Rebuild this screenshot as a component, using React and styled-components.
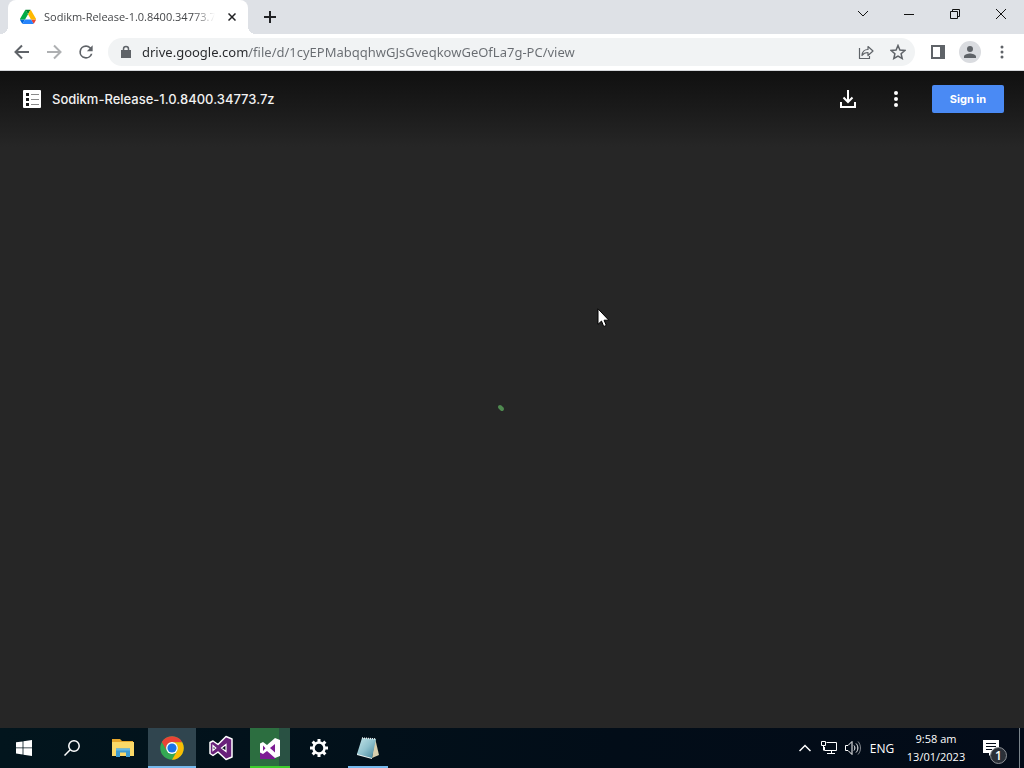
import React from "react";
import styled, { createGlobalStyle, css } from "styled-components";

const GlobalStyle = createGlobalStyle`
  * { box-sizing: border-box; }
  body { margin: 0; background: #262626; font-family: "Open Sans", "Noto Sans", sans-serif; }
  button { border: 0; padding: 0; background: none; font: inherit; color: inherit; }
  svg { display: block; flex: none; }
`;

const Screen = styled.div`
  display: flex;
  flex-direction: column;
  min-height: 100vh;
`;

/* Browser window */
const TabStrip = styled.header`
  display: flex;
  height: 34px;
  padding-left: 8px;
  background: #dee1e6;
  color: #202124;
`;

const Tab = styled.div`
  position: relative;
  display: flex;
  align-items: center;
  width: 240px;
  padding: 0 8px 0 12px;
  border-radius: 8px 8px 0 0;
  background: #fff;
  &::before, &::after {
    content: "";
    position: absolute;
    bottom: 0;
    width: 8px;
    height: 8px;
  }
  &::before { left: -8px; background: radial-gradient(circle at 0 0, #dee1e6 8px, #fff 8px); }
  &::after { right: -8px; background: radial-gradient(circle at 100% 0, #dee1e6 8px, #fff 8px); }
`;

const TabTitle = styled.span`
  flex: 1;
  min-width: 0;
  margin: 0 2px 0 8px;
  overflow: hidden;
  white-space: nowrap;
  font-size: 11px;
  line-height: 16px;
  color: #45474a;
  mask-image: linear-gradient(to right, #000 84%, transparent 96%);
`;

const IconButton = styled.button`
  display: flex;
  align-items: center;
  justify-content: center;
  flex: none;
  width: ${(p) => p.$w || 32}px;
  height: ${(p) => p.$h || 28}px;
`;

const WindowControls = styled.div`
  display: flex;
  margin-left: auto;
  color: #111;
`;

const Toolbar = styled.nav`
  display: flex;
  align-items: center;
  height: 37px;
  padding: 0 6px;
  border-bottom: 1px solid #d5d7da;
  background: #fff;
  color: #5f6368;
`;

const Omnibox = styled.div`
  display: flex;
  align-items: center;
  flex: 1;
  min-width: 0;
  height: 28px;
  margin: 0 7px 0 6px;
  padding: 0 1px 0 12px;
  border-radius: 14px;
  background: #f1f3f4;
`;

const Address = styled.input`
  flex: 1;
  min-width: 0;
  height: 24px;
  margin-left: 10px;
  padding: 0;
  border: 0;
  outline: 0;
  font: 13px/20px "Noto Sans", "Open Sans", sans-serif;
  color: transparent;
  background: linear-gradient(to right, #27292c 107px, #686c71 107px);
  background-clip: text;
`;

const Avatar = styled.span`
  display: flex;
  align-items: center;
  justify-content: center;
  width: 22px;
  height: 22px;
  border-radius: 50%;
  background: #dadce0;
`;

/* File viewer */
const Viewer = styled.main`
  display: flex;
  flex-direction: column;
  flex: 1;
  background: linear-gradient(to bottom, #101010, #1b1b1b 40px, #262626 76px);
`;

const ViewerBar = styled.div`
  display: flex;
  align-items: center;
  height: 56px;
  padding: 0 20px 0 23px;
  color: #fff;
`;

const FileName = styled.h1`
  flex: 1;
  margin: 0 0 0 11px;
  font: 500 13px/20px Inter, "Open Sans", sans-serif;
  color: #f1f1f1;
`;

const SignIn = styled.a`
  width: 72px;
  margin-left: 12px;
  border-radius: 2px;
  background: #4a8af4;
  color: #fff;
  font: 700 11px/28px Inter, "Open Sans", sans-serif;
  text-align: center;
  text-decoration: none;
`;

const Stage = styled.section`
  display: flex;
  align-items: center;
  justify-content: center;
  flex: 1;
`;

const Spinner = styled.svg`
  margin: 0 22px 40px 0;
`;

const Pointer = styled.svg`
  position: absolute;
  left: 597px;
  top: 308px;
`;

/* Desktop taskbar */
const Taskbar = styled.footer`
  display: flex;
  height: 40px;
  background: linear-gradient(to right, #02151d, #020d18 60%, #030b18);
  color: #fff;
`;

const Apps = styled.div`
  display: flex;
  gap: 1px;
  margin-left: 3px;
`;

const AppButton = styled.button`
  display: flex;
  align-items: center;
  justify-content: center;
  width: ${(p) => (p.$inset ? 40 : 48)}px;
  margin: 0 ${(p) => (p.$inset ? 4 : 0)}px;
  border-bottom: 2px solid transparent;
  border-top: 2px solid transparent;
  ${(p) => p.$state === "active" && css`background: #30454f; border-color: #30454f #30454f #76b9ed;`}
  ${(p) => p.$state === "open" && css`border-bottom-color: #76b9ed;`}
  ${(p) => p.$state === "busy" && css`
    background: linear-gradient(to right, #2c6e40 29px, #295143 29px) border-box;
    border-bottom-color: #3dcc2c;
  `}
`;

const Tray = styled.div`
  display: flex;
  align-items: center;
  margin-left: auto;
  font-size: 12px;
`;

const Language = styled(IconButton)`
  font-size: 12px;
`;

const Clock = styled.time`
  width: 74px;
  font-size: 11px;
  line-height: 18px;
  text-align: center;
  white-space: nowrap;
`;

const Notifications = styled(IconButton)`
  position: relative;
`;

const Badge = styled.span`
  position: absolute;
  right: 12px;
  bottom: 4px;
  width: 17px;
  height: 17px;
  border: 1px solid #8d9196;
  border-radius: 50%;
  background: #2b3038;
  font-size: 12px;
  font-weight: 600;
  line-height: 15px;
  text-align: center;
`;

const ShowDesktop = styled.button`
  width: 5px;
  height: 40px;
  border-left: 1px solid #7b858c;
`;

const Line = ({ size = 16, w = 1, children, ...rest }) => (
  <svg width={size} height={size} viewBox={`0 0 ${size} ${size}`} fill="none" stroke="currentColor" strokeWidth={w} {...rest}>
    {children}
  </svg>
);

const Solid = ({ size = 24, box = 24, children }) => (
  <svg width={size} height={size} viewBox={`0 0 ${box} ${box}`} fill="currentColor">{children}</svg>
);

const DriveLogo = () => (
  <svg width="16" height="16" viewBox="0 0 87 80">
    <path fill="#0066da" d="m6.6 66.9 3.9 6.6c.8 1.4 2 2.5 3.3 3.3L27.5 53H0c0 1.6.4 3.1 1.2 4.5z" />
    <path fill="#00ac47" d="M43.7 25 29.9 1.2c-1.3.8-2.5 1.9-3.3 3.3L1.2 48.5C.4 49.9 0 51.4 0 53h27.5z" />
    <path fill="#ea4335" d="M73.6 76.8c1.3-.8 2.5-1.9 3.3-3.3l9.1-16c.8-1.4 1.2-2.9 1.2-4.5H59.8l5.9 11.5z" />
    <path fill="#00832d" d="M43.7 25 57.4 1.2C56.1.4 54.5 0 52.9 0H34.4c-1.6 0-3.2.4-4.5 1.2z" />
    <path fill="#2684fc" d="M59.8 53H27.5L13.8 76.8c1.3.8 2.9 1.2 4.5 1.2h50.8c1.6 0 3.2-.4 4.5-1.2z" />
    <path fill="#ffba00" d="M73.4 26.5 60.7 4.5c-.8-1.4-2-2.5-3.3-3.3L43.7 25l16.1 28h27.4c0-1.6-.4-3.1-1.2-4.5z" />
  </svg>
);

const ChromeLogo = () => (
  <svg width="24" height="24" viewBox="0 0 48 48">
    <circle cx="24" cy="24" r="23.5" fill="#34a853" />
    <path fill="#ea4335" d="M3.7 12.2A23.5 23.5 0 0 1 44.4 12.3H24a11.8 11.8 0 0 0-10.2 17.6z" />
    <path fill="#fbbc04" d="M44.4 12.3A23.5 23.5 0 0 1 24 47.5l10.2-17.6A11.8 11.8 0 0 0 24 12.3z" />
    <circle cx="24" cy="24" r="11.8" fill="#fff" />
    <circle cx="24" cy="24" r="9.2" fill="#1a73e8" />
  </svg>
);

const StudioLogo = () => (
  <svg width="26" height="26" viewBox="0 0 26 26">
    <path fill="#68217a" stroke="#fff" strokeWidth="1.500" strokeLinejoin="round" d="M18 1.500 24 4v18l-6 2.500-8-7.500-5 3.500L2 18.500v-11L5 6l5 3.500z" />
    <path fill="#020f19" stroke="#fff" strokeWidth="1.200" d="M18 9.500v7L13.500 13zM5 10.500v5l2.800-2.500z" />
  </svg>
);

const InstallerLogo = () => (
  <svg width="22" height="24" viewBox="0 0 22 24">
    <path fill="#7d1c94" d="M1 10h15v13H1z" />
    <path fill="#fff" d="m16 2 5 2v16l-5 2-8-7-4 3-3-1.500v-9L4 6l4 3z" />
    <path fill="#7d1c94" d="m16 8-5 4 5 4.500zM4 9.500V15l2.500-2.800z" />
  </svg>
);

const FolderLogo = () => (
  <svg width="22" height="20" viewBox="0 0 22 20">
    <path fill="#e8a82c" d="M0 1h8l2 2h11v4H0z" />
    <path fill="#fbd968" d="M0 4h22v14H0z" />
    <path fill="#3d9bd0" d="M4 10.500h14V19h-4v-4.500H8V19H4z" />
    <path fill="#67b9e4" d="M4 10.500h14v2H4z" />
  </svg>
);

const NotepadLogo = () => (
  <svg width="24" height="24" viewBox="0 0 24 24">
    <defs>
      <linearGradient id="sheet" x1="0" y1="0" x2="1" y2="1">
        <stop offset="0" stopColor="#c3e4e8" />
        <stop offset=".5" stopColor="#8fc1cd" />
        <stop offset="1" stopColor="#3e8098" />
      </linearGradient>
    </defs>
    <path fill="#d8cfae" d="m19 2 4 17-7 3z" />
    <path fill="#eef3f2" d="M1 17v2l15 4v-2z" />
    <path fill="url(#sheet)" d="m6 2 14 1-4 19L1 18z" />
    <path stroke="#e9eef0" strokeWidth="1.500" strokeDasharray="1 1" d="m6 2 14 1" />
  </svg>
);

const gearTeeth = [0, 45, 90, 135, 180, 225, 270, 315];

export default function App() {
  return (
    <Screen>
      <GlobalStyle />
      <TabStrip>
        <Tab>
          <DriveLogo />
          <TabTitle>Sodikm-Release-1.0.8400.34773.7z</TabTitle>
          <IconButton $w={16} aria-label="Close tab">
            <Line size={8} w={1.500}><path d="m.5.5 7 7M7.500.5l-7 7" /></Line>
          </IconButton>
        </Tab>
        <IconButton $w={44} $h={34} aria-label="New tab">
          <Line size={12} w={2}><path d="M6 0v12M0 6h12" /></Line>
        </IconButton>
        <WindowControls>
          <IconButton $w={46} aria-label="Search tabs">
            <Line size={12}><path d="m1 3 5 5 5-5" /></Line>
          </IconButton>
          <IconButton $w={46} aria-label="Minimise">
            <Line size={10}><path d="M0 5.500h10" /></Line>
          </IconButton>
          <IconButton $w={46} aria-label="Restore">
            <Line size={10}><path d="M.5 2.500h7v7h-7zM2.500 2.500v-2h7v7h-2" /></Line>
          </IconButton>
          <IconButton $w={46} aria-label="Close">
            <Line size={12}><path d="m1 1 10 10M11 1 1 11" /></Line>
          </IconButton>
        </WindowControls>
      </TabStrip>

      <Toolbar>
        <IconButton aria-label="Back"><Line w={2}><path d="M15 8H2M8 1.500 1.500 8 8 14.500" /></Line></IconButton>
        <IconButton aria-label="Forward"><Line w={2} opacity=".5"><path d="M1 8h13M8 1.500 14.500 8 8 14.500" /></Line></IconButton>
        <IconButton aria-label="Reload">
          <Solid size={20}><path d="M17.650 6.350A7.960 7.960 0 0 0 12 4a8 8 0 1 0 7.730 10h-2.080A6 6 0 1 1 12 6c1.660 0 3.140.69 4.220 1.780L13 11h7V4z" /></Solid>
        </IconButton>
        <Omnibox>
          <svg width="12" height="14" viewBox="0 0 12 14" aria-hidden="true">
            <path fill="#5f6368" d="M1 5h10v8H1z" />
            <path fill="none" stroke="#5f6368" strokeWidth="1.500" d="M3.500 5.500V4a2.500 2.500 0 0 1 5 0v1.500" />
          </svg>
          <Address aria-label="Address" readOnly value="drive.google.com/file/d/1cyEPMabqqhwGJsGveqkowGeOfLa7g-PC/view" />
          <IconButton aria-label="Share this page">
            <Line w={1}>
              <path d="M1.500 4v10.500h10V12M4 11.500c.3-4 2.500-6 6-6v-3l5 4.500-5 4.500v-3c-2.800 0-4.500.8-6 3z" strokeLinejoin="round" strokeWidth="1.200" />
            </Line>
          </IconButton>
          <IconButton aria-label="Bookmark this tab">
            <Line w={1.500}><path d="m8 1.500 1.900 4.600 4.900.4-3.700 3.200 1.100 4.800L8 12l-4.200 2.500 1.100-4.800-3.700-3.200 4.900-.4z" /></Line>
          </IconButton>
        </Omnibox>
        <IconButton aria-label="Side panel">
          <Line size={14} w={2}><path d="M1 1h12v12H1z" /><path fill="currentColor" stroke="none" d="M9 1h4v12H9z" /></Line>
        </IconButton>
        <IconButton aria-label="Profile">
          <Avatar><Solid size={18}><path d="M12 12a4 4 0 1 0 0-8 4 4 0 0 0 0 8zm0 2c-2.700 0-8 1.300-8 4v2h16v-2c0-2.700-5.300-4-8-4z" /></Solid></Avatar>
        </IconButton>
        <IconButton aria-label="Browser menu">
          <Solid size={16} box={16}><circle cx="8" cy="3" r="1.500" /><circle cx="8" cy="8" r="1.500" /><circle cx="8" cy="13" r="1.500" /></Solid>
        </IconButton>
      </Toolbar>

      <Viewer>
        <ViewerBar>
          <svg width="18" height="18" viewBox="0 0 18 18" aria-hidden="true">
            <rect width="18" height="18" rx="1" fill="#fff" />
            <path fill="#161616" d="M3 3h3v3H3zM3 8h3v3H3zM3 13h3v3H3z" />
            <path fill="#8a8a8a" d="M8 4h8v1H8zM8 9h8v1H8zM8 14h8v1H8z" />
          </svg>
          <FileName>Sodikm-Release-1.0.8400.34773.7z</FileName>
          <IconButton $w={48} $h={40} aria-label="Download">
            <Line size={18} w={2}><path d="M9 0v12M4.500 7.500 9 12l4.500-4.500M2 12v5h14v-5" /></Line>
          </IconButton>
          <IconButton $w={48} $h={40} aria-label="More actions">
            <Solid><circle cx="12" cy="6" r="2" /><circle cx="12" cy="12" r="2" /><circle cx="12" cy="18" r="2" /></Solid>
          </IconButton>
          <SignIn href="#signin">Sign in</SignIn>
        </ViewerBar>
        <Stage aria-label="Loading">
          <Spinner width="8" height="8" viewBox="0 0 8 8">
            <path stroke="#4f8a50" strokeWidth="4" strokeLinecap="round" d="m3 3 2 2" />
          </Spinner>
        </Stage>
      </Viewer>

      <Taskbar>
        <IconButton $w={48} $h={40} aria-label="Start">
          <Solid size={16} box={16}><path d="M0 2.300 6.600 1.400v6.100H0zM7.400 1.300 16 0v7.500H7.400zM0 8.300h6.600v6.200L0 13.600zM7.400 8.300H16V16l-8.600-1.300z" /></Solid>
        </IconButton>
        <IconButton $w={48} $h={40} aria-label="Search">
          <Line w={1.500}><circle cx="10" cy="6" r="5.200" /><path d="M6.200 9.800.5 15.500" /></Line>
        </IconButton>
        <Apps>
          <AppButton aria-label="File Explorer"><FolderLogo /></AppButton>
          <AppButton $state="active" aria-label="Chrome"><ChromeLogo /></AppButton>
          <AppButton aria-label="Visual Studio"><StudioLogo /></AppButton>
          <AppButton $inset $state="busy" aria-label="Visual Studio Installer"><InstallerLogo /></AppButton>
          <AppButton aria-label="Settings">
            <Line size={18} w={2.500}>
              <circle cx="9" cy="9" r="5.500" />
              {gearTeeth.map((a) => <path key={a} strokeWidth="3" d="M9 0v3.500" transform={`rotate(${a} 9 9)`} />)}
            </Line>
          </AppButton>
          <AppButton $inset $state="open" aria-label="Notepad"><NotepadLogo /></AppButton>
        </Apps>
        <Tray>
          <IconButton $w={24} aria-label="Show hidden icons"><Line size={12} w={1.500}><path d="m.5 9 5.500-5.500L11.500 9" /></Line></IconButton>
          <IconButton $w={24} aria-label="Network">
            <Line size={16} w={1}><path d="M5.500 2.500h10v8h-12V7M10.500 10.500v3M6 13.500h8M.5 1.500h4v4h-4zM2.500 5.500v5" /></Line>
          </IconButton>
          <IconButton $w={24} aria-label="Volume">
            <Line size={16} w={1}><path d="M.5 5.500H3l4-4v13l-4-4H.5zM9 5.500c1.200 1.500 1.200 3.500 0 5M11 3.500c2.500 2.500 2.500 6.500 0 9" /><path opacity=".5" d="M13 1.500c3.300 3.500 3.300 9.500 0 13" /></Line>
          </IconButton>
          <Language $w={34}>ENG</Language>
          <Clock dateTime="2023-01-13T09:58">9:58 am<br />13/01/2023</Clock>
          <Notifications $w={46} $h={40} aria-label="Notifications">
            <svg width="26" height="16" viewBox="0 0 26 16">
              <path fill="#fff" d="M0 0h16v13H9l-3 3v-3H0z" />
              <path stroke="#030b18" d="M3 3.500h10M3 6.500h10M3 9.500h6" />
            </svg>
            <Badge>1</Badge>
          </Notifications>
          <ShowDesktop aria-label="Show desktop" />
        </Tray>
      </Taskbar>
      <Pointer width="14" height="20" viewBox="0 0 14 20" aria-hidden="true">
        <path fill="#fff" stroke="#000" strokeWidth="1" d="M1 .8v15.500l3.500-3.200 2.200 5.400 2.600-1.100-2.200-5.200h4.700z" />
      </Pointer>
    </Screen>
  );
}
